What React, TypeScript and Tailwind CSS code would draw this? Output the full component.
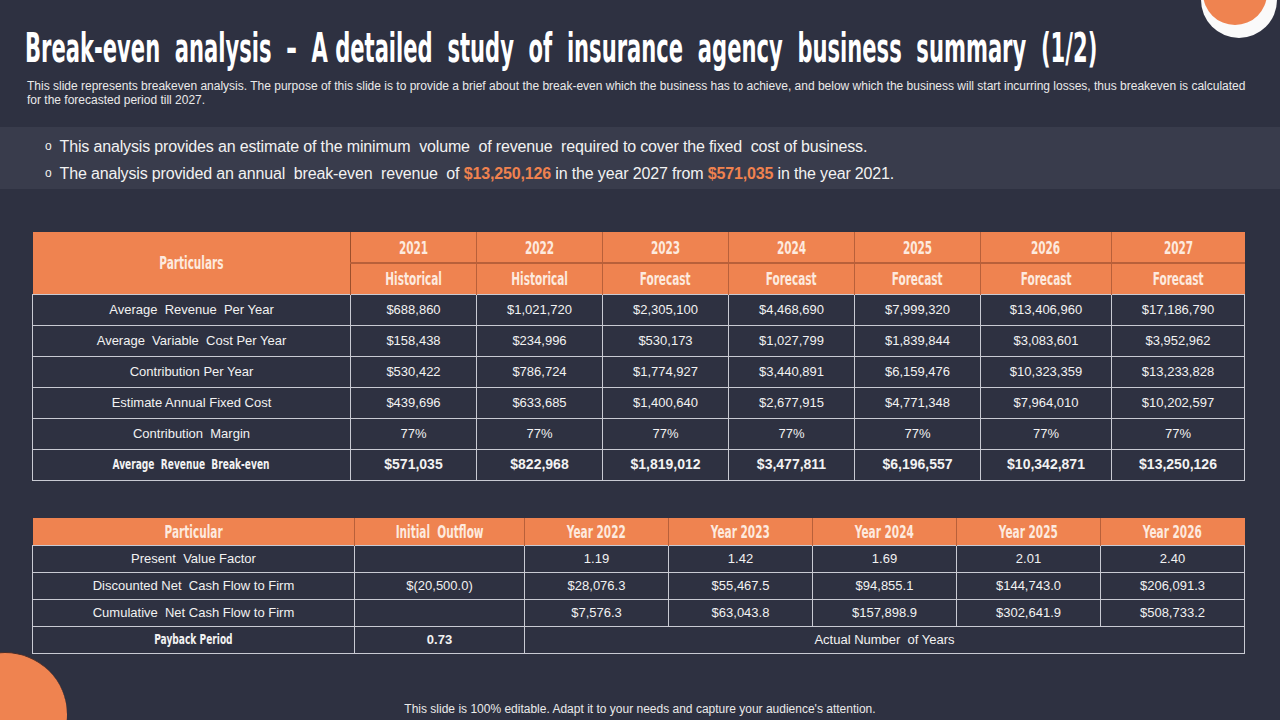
import React from "react";

const cond = "font-['Liberation_Sans_Narrow','DejaVu_Sans_Condensed','Liberation_Sans',sans-serif] font-bold";
const sans = "font-['Liberation_Sans',Arial,sans-serif]";

const years = ["2021", "2022", "2023", "2024", "2025", "2026", "2027"];
const types = ["Historical", "Historical", "Forecast", "Forecast", "Forecast", "Forecast", "Forecast"];
const t1Widths = [318, 126, 126, 126, 126, 126, 131, 133];

const t1Rows: [string, string[]][] = [
  ["Average  Revenue  Per Year", ["$688,860", "$1,021,720", "$2,305,100", "$4,468,690", "$7,999,320", "$13,406,960", "$17,186,790"]],
  ["Average  Variable  Cost Per Year", ["$158,438", "$234,996", "$530,173", "$1,027,799", "$1,839,844", "$3,083,601", "$3,952,962"]],
  ["Contribution Per Year", ["$530,422", "$786,724", "$1,774,927", "$3,440,891", "$6,159,476", "$10,323,359", "$13,233,828"]],
  ["Estimate Annual Fixed Cost", ["$439,696", "$633,685", "$1,400,640", "$2,677,915", "$4,771,348", "$7,964,010", "$10,202,597"]],
  ["Contribution  Margin", ["77%", "77%", "77%", "77%", "77%", "77%", "77%"]],
];
const t1Last = ["$571,035", "$822,968", "$1,819,012", "$3,477,811", "$6,196,557", "$10,342,871", "$13,250,126"];

const t2Widths = [322, 170, 144, 144, 144, 144, 144];
const t2Head = ["Particular", "Initial  Outflow", "Year 2022", "Year 2023", "Year 2024", "Year 2025", "Year 2026"];
const t2Rows: [string, string[]][] = [
  ["Present  Value Factor", ["", "1.19", "1.42", "1.69", "2.01", "2.40"]],
  ["Discounted Net  Cash Flow to Firm", ["$(20,500.0)", "$28,076.3", "$55,467.5", "$94,855.1", "$144,743.0", "$206,091.3"]],
  ["Cumulative  Net Cash Flow to Firm", ["", "$7,576.3", "$63,043.8", "$157,898.9", "$302,641.9", "$508,733.2"]],
];

const bodyCell = "border border-[#c9cad3] text-center text-[13px] text-[#f2f2f2] whitespace-pre p-0";
const headCell = `${cond} text-[18px] text-[#fdeadf] p-0 font-bold`;

function Narrow({ children }: { children: React.ReactNode }) {
  return <span className="inline-block origin-center scale-x-[0.65] whitespace-pre">{children}</span>;
}

function NarrowSmall({ children }: { children: React.ReactNode }) {
  return <span className="inline-block origin-center scale-x-[0.72] whitespace-pre">{children}</span>;
}

export default function App() {
  return (
    <div className={`relative w-[1280px] h-[720px] overflow-hidden bg-[#2e3141] ${sans}`}>
      {/* decorations */}
      <div className="absolute left-[1201px] top-[-38px] w-[76px] h-[76px] rounded-full bg-[#fafafa]" />
      <div className="absolute left-[1203px] top-[-39px] w-[64px] h-[64px] rounded-full bg-[#ef8350]" />
      <div className="absolute left-[-57px] top-[652px] w-[124px] h-[124px] rounded-full bg-[#ef8350] border-t border-[#4a2e2a]" />

      <div className="relative flex flex-col">
        <h1 className={`${cond} text-white text-[40px] leading-[40px] pl-[25px] pt-[28px] whitespace-pre`}>
          <span className="inline-block origin-left scale-x-[0.586]">
            Break-even  analysis  –  A detailed  study  of  insurance  agency  business  summary  (1/2)
          </span>
        </h1>
        <p className="text-[12px] leading-[14px] text-[#eaeaea] pl-[27px] pr-[28px] mt-[11px]">
          This slide represents breakeven analysis. The purpose of this slide is to provide a brief about the break-even which the business has to achieve, and below which the business will start incurring losses, thus breakeven is calculated for the forecasted period till 2027.
        </p>

        <div className="mt-[20px] h-[62px] bg-[#393c4c] flex flex-col justify-center gap-[8px] pt-[4px] pl-[45px] text-[16px] leading-[19px] text-[#f2f2f2] tracking-[-0.15px]">
          <div className="flex items-center gap-[8px] whitespace-pre">
            <span className="text-[12px]">o</span>
            <span>This analysis provides an estimate of the minimum  volume  of revenue  required to cover the fixed  cost of business.</span>
          </div>
          <div className="flex items-center gap-[8px] whitespace-pre">
            <span className="text-[12px]">o</span>
            <span>
              The analysis provided an annual  break-even  revenue  of <b className="text-[#f0824f]">$13,250,126</b> in the year 2027 from <b className="text-[#f0824f]">$571,035</b> in the year 2021.
            </span>
          </div>
        </div>

        {/* table 1 */}
        <div className="mt-[43px] pl-[32px]">
          <table className="border-collapse table-fixed w-[1212px]">
            <colgroup>
              {t1Widths.map((w, i) => (
                <col key={i} style={{ width: w }} />
              ))}
            </colgroup>
            <thead>
              <tr className="h-[31px] bg-[#ef8350]">
                <th rowSpan={2} className={`${headCell} border-r border-[#9c4f2c]`}>
                  <Narrow>Particulars</Narrow>
                </th>
                {years.map((y) => (
                  <th key={y} className={`${headCell} border-r border-b-2 border-[#b8603a] last:border-r-0`}>
                    <Narrow>{y}</Narrow>
                  </th>
                ))}
              </tr>
              <tr className="h-[31px] bg-[#ef8350]">
                {types.map((t, i) => (
                  <th key={i} className={`${headCell} border-r border-[#b8603a] last:border-r-0`}>
                    <Narrow>{t}</Narrow>
                  </th>
                ))}
              </tr>
            </thead>
            <tbody>
              {t1Rows.map(([label, vals]) => (
                <tr key={label} className="h-[31px]">
                  <td className={bodyCell}>{label}</td>
                  {vals.map((v, i) => (
                    <td key={i} className={bodyCell}>{v}</td>
                  ))}
                </tr>
              ))}
              <tr className="h-[31px]">
                <td className={`${bodyCell} ${cond} !text-[14px]`}>
                  <NarrowSmall>Average  Revenue  Break-even</NarrowSmall>
                </td>
                {t1Last.map((v, i) => (
                  <td key={i} className={`${bodyCell} !text-[14px] font-bold`}>{v}</td>
                ))}
              </tr>
            </tbody>
          </table>
        </div>

        {/* table 2 */}
        <div className="mt-[37px] pl-[32px]">
          <table className="border-collapse table-fixed w-[1212px]">
            <colgroup>
              {t2Widths.map((w, i) => (
                <col key={i} style={{ width: w }} />
              ))}
            </colgroup>
            <thead>
              <tr className="h-[27px] bg-[#ef8350]">
                {t2Head.map((h) => (
                  <th key={h} className={`${headCell} border-r border-[#b8603a] last:border-r-0`}>
                    <Narrow>{h}</Narrow>
                  </th>
                ))}
              </tr>
            </thead>
            <tbody>
              {t2Rows.map(([label, vals]) => (
                <tr key={label} className="h-[27px]">
                  <td className={bodyCell}>{label}</td>
                  {vals.map((v, i) => (
                    <td key={i} className={bodyCell}>{v}</td>
                  ))}
                </tr>
              ))}
              <tr className="h-[27px]">
                <td className={`${bodyCell} ${cond} !text-[14px]`}>
                  <NarrowSmall>Payback Period</NarrowSmall>
                </td>
                <td className={`${bodyCell} font-bold`}>0.73</td>
                <td colSpan={5} className={bodyCell}>Actual Number  of Years</td>
              </tr>
            </tbody>
          </table>
        </div>

        <p className="mt-[46px] text-center text-[12px] text-[#eaeaea]">
          This slide is 100% editable. Adapt it to your needs and capture your audience's attention.
        </p>
      </div>
    </div>
  );
}
